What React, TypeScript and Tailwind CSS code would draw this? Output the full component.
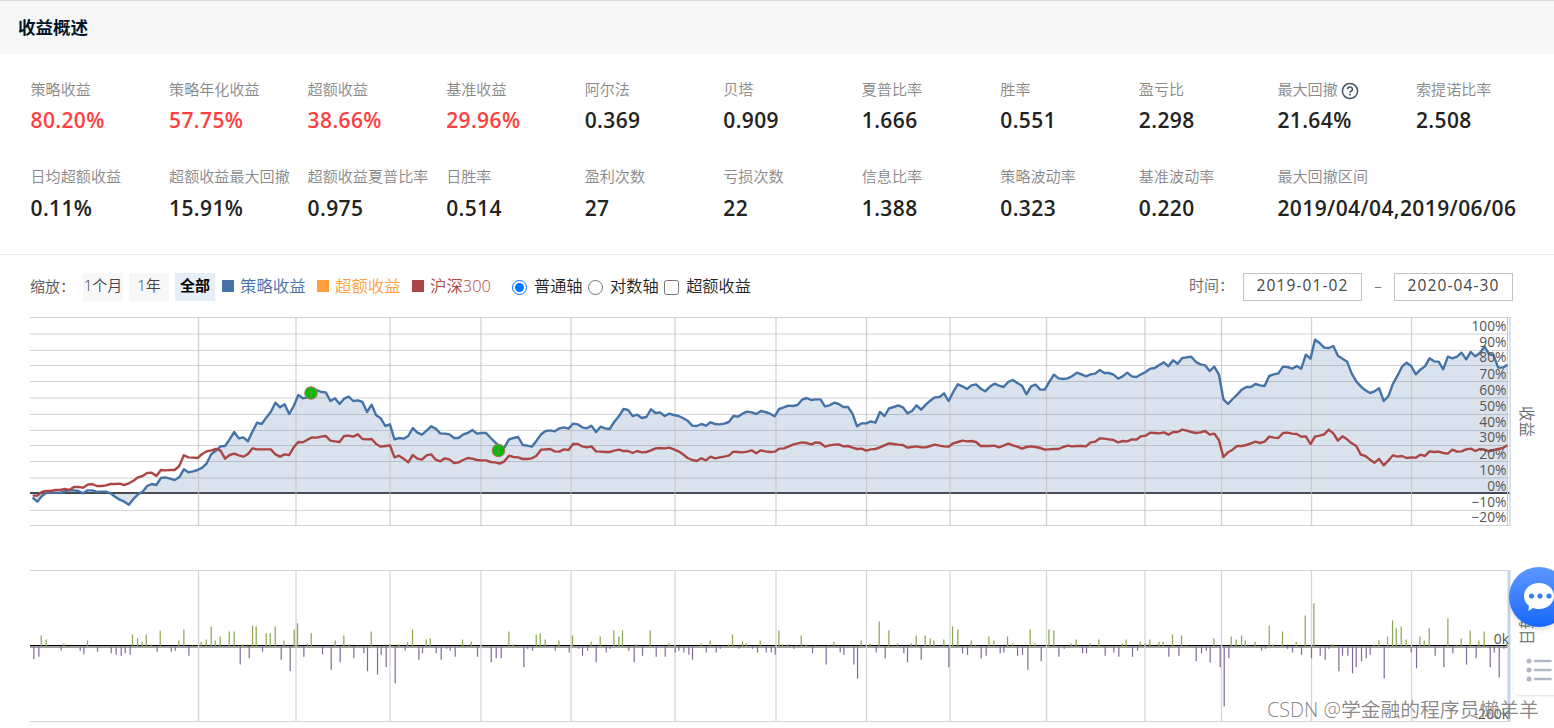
import React, { useState } from 'react';

const FONT = '"Open Sans", "Noto Sans CJK SC", sans-serif';

const metrics = [
  { label: '策略收益', value: '80.20%', up: true },
  { label: '策略年化收益', value: '57.75%', up: true },
  { label: '超额收益', value: '38.66%', up: true },
  { label: '基准收益', value: '29.96%', up: true },
  { label: '阿尔法', value: '0.369' },
  { label: '贝塔', value: '0.909' },
  { label: '夏普比率', value: '1.666' },
  { label: '胜率', value: '0.551' },
  { label: '盈亏比', value: '2.298' },
  { label: '最大回撤', value: '21.64%', help: true },
  { label: '索提诺比率', value: '2.508' },
  { label: '日均超额收益', value: '0.11%' },
  { label: '超额收益最大回撤', value: '15.91%' },
  { label: '超额收益夏普比率', value: '0.975' },
  { label: '日胜率', value: '0.514' },
  { label: '盈利次数', value: '27' },
  { label: '亏损次数', value: '22' },
  { label: '信息比率', value: '1.388' },
  { label: '策略波动率', value: '0.323' },
  { label: '基准波动率', value: '0.220' },
  { label: '最大回撤区间', value: '2019/04/04,2019/06/06' },
];

// Series samples in thirds of a pixel, measured down from the top of the chart
const strategy = [
  563, 575, 558, 548, 548, 548, 549, 544, 540, 541, 543, 550, 541, 541, 546, 545, 545, 550, 560, 569,
  575, 584, 567, 553, 545, 528, 522, 525, 504, 502, 506, 510, 502, 478, 487, 484, 480, 473, 460, 432,
  422, 409, 408, 388, 366, 385, 382, 394, 364, 338, 342, 323, 305, 278, 292, 283, 312, 288, 255, 265,
  262, 247, 240, 246, 247, 273, 265, 282, 266, 260, 273, 271, 276, 306, 284, 316, 325, 348, 343, 388,
  384, 386, 378, 354, 368, 374, 362, 349, 356, 370, 371, 373, 384, 384, 373, 369, 360, 371, 369, 369,
  384, 397, 410, 412, 388, 384, 381, 405, 407, 410, 392, 373, 363, 361, 364, 355, 352, 356, 341, 343,
  352, 355, 347, 366, 350, 355, 357, 335, 319, 297, 300, 318, 314, 324, 321, 298, 309, 307, 318, 311,
  315, 318, 324, 332, 347, 348, 342, 347, 337, 342, 343, 341, 336, 318, 320, 311, 305, 307, 312, 303,
  306, 311, 319, 297, 292, 287, 288, 285, 269, 264, 270, 268, 268, 289, 286, 278, 282, 291, 291, 311,
  349, 340, 340, 334, 338, 306, 318, 295, 291, 286, 292, 310, 303, 286, 299, 284, 272, 262, 261, 250,
  273, 246, 223, 229, 237, 226, 223, 236, 244, 230, 221, 227, 231, 216, 210, 219, 227, 253, 229, 224,
  239, 239, 215, 194, 205, 207, 205, 198, 188, 193, 199, 193, 191, 180, 189, 189, 194, 206, 199, 188,
  199, 201, 193, 186, 176, 174, 165, 157, 169, 151, 161, 144, 142, 140, 156, 163, 166, 183, 170, 193,
  268, 282, 267, 254, 239, 231, 231, 222, 226, 228, 198, 193, 190, 170, 171, 176, 168, 176, 134, 146,
  89, 99, 113, 114, 108, 137, 146, 155, 190, 214, 229, 241, 249, 244, 235, 273, 259, 222, 197, 170,
  158, 168, 193, 179, 169, 145, 154, 155, 178, 140, 145, 140, 128, 148, 126, 139, 129, 110, 132, 136,
  173, 173, 164,
];

const benchmark = [
  557, 557, 546, 543, 543, 540, 540, 537, 540, 531, 531, 533, 524, 522, 528, 528, 526, 522, 522, 521,
  525, 520, 512, 502, 498, 489, 488, 498, 480, 481, 480, 480, 468, 436, 442, 443, 444, 432, 424, 421,
  417, 422, 446, 435, 431, 436, 440, 432, 415, 418, 418, 418, 418, 433, 440, 433, 435, 412, 396, 397,
  389, 382, 383, 380, 378, 392, 394, 396, 378, 377, 380, 373, 387, 388, 387, 402, 410, 408, 406, 442,
  437, 446, 457, 435, 446, 449, 436, 433, 449, 454, 445, 448, 459, 457, 450, 444, 446, 450, 451, 451,
  456, 457, 461, 454, 437, 441, 442, 447, 447, 445, 437, 419, 418, 417, 424, 425, 418, 420, 402, 402,
  409, 412, 409, 424, 425, 426, 426, 422, 419, 423, 423, 429, 423, 427, 426, 421, 415, 414, 415, 413,
  418, 424, 433, 444, 450, 453, 445, 451, 440, 445, 442, 440, 437, 425, 426, 427, 425, 421, 430, 421,
  424, 426, 425, 416, 415, 410, 404, 400, 397, 399, 403, 397, 399, 410, 406, 404, 403, 409, 408, 413,
  417, 416, 422, 418, 417, 412, 406, 400, 402, 404, 405, 413, 411, 409, 412, 412, 408, 404, 407, 409,
  410, 400, 396, 392, 394, 393, 396, 408, 408, 408, 407, 412, 407, 401, 406, 410, 416, 411, 409, 411,
  414, 419, 418, 417, 417, 411, 407, 409, 408, 408, 409, 397, 395, 385, 386, 388, 390, 397, 393, 394,
  388, 389, 379, 377, 368, 369, 370, 367, 374, 366, 366, 359, 362, 366, 369, 367, 363, 374, 371, 390,
  441, 427, 419, 408, 408, 405, 400, 395, 399, 395, 380, 383, 384, 369, 368, 371, 372, 380, 379, 402,
  380, 377, 373, 359, 370, 392, 379, 388, 400, 408, 434, 438, 449, 458, 447, 466, 452, 436, 440, 438,
  444, 442, 443, 434, 438, 424, 426, 425, 429, 431, 419, 425, 424, 418, 416, 423, 417, 419, 424, 420,
  417, 414, 406,
];

// Daily profit and loss bars: offset of the block, then [x, height] in thirds of a pixel
const gains: [number, number[][]][] = [
  [0, [
    [63, 33], [78, 21], [131, 9], [146, 1], [161, 1], [202, 18], [243, 1], [337, 36], [352, 25], [366, 14],
    [378, 36], [393, 6], [420, 48], [435, 1], [476, 18], [491, 51], [517, 3], [530, 1], [543, 14], [558, 21],
    [573, 60], [585, 18], [600, 30], [627, 45], [642, 45], [667, 6], [697, 63], [708, 60], [738, 40], [750, 40],
    [765, 60], [791, 18], [822, 51], [832, 70], [862, 9], [873, 40], [945, 18], [971, 33], [986, 6], [1012, 3],
    [1053, 45], [1110, 6], [1136, 6], [1162, 13], [1177, 51], [1218, 21], [1230, 25], [1327, 21], [1342, 3],
    [1353, 15], [1395, 1], [1451, 1], [1466, 45],
  ]],
  [1470, [
    [8, 6], [22, 1], [78, 36], [90, 40], [105, 21], [120, 1], [146, 18], [161, 1], [187, 33], [243, 14], [270, 30],
    [311, 48], [326, 30], [337, 48], [378, 6], [408, 1], [420, 48], [450, 1], [476, 9], [573, 9], [600, 18],
    [641, 1], [656, 6], [667, 36], [697, 14], [708, 9], [750, 18], [806, 48], [817, 6], [832, 6], [858, 3],
    [873, 33], [888, 6], [914, 3], [956, 3], [971, 14], [1053, 18], [1080, 9], [1107, 75], [1136, 48], [1148, 3],
    [1162, 9], [1203, 9], [1218, 33], [1245, 33], [1260, 25], [1271, 18], [1301, 21], [1327, 60], [1343, 51],
    [1383, 18], [1395, 4], [1436, 30], [1451, 18],
  ]],
  [2940, [
    [22, 30], [37, 9], [90, 51], [105, 9], [146, 51], [161, 48], [202, 1], [213, 9], [228, 21], [269, 9], [284, 1],
    [296, 21], [367, 9], [378, 21], [420, 14], [435, 9], [449, 21], [461, 1], [476, 14], [489, 14], [517, 36],
    [544, 33], [558, 3], [571, 1], [641, 25], [693, 30], [708, 21], [724, 33], [735, 18], [765, 14], [807, 63],
    [817, 6], [832, 1], [847, 45], [888, 14], [915, 93], [941, 130], [997, 6], [1121, 6], [1136, 18], [1162, 30],
    [1177, 78], [1188, 55], [1203, 60], [1218, 21], [1259, 30], [1272, 18], [1287, 55], [1343, 85], [1368, 6],
    [1383, 25], [1410, 48], [1436, 18], [1452, 45], [1519, 9],
  ]],
];

const losses: [number, number[][]][] = [
  [0, [
    [41, 38], [56, 31], [123, 13], [180, 13], [191, 23], [232, 16], [273, 20], [288, 25], [303, 28], [315, 20],
    [330, 25], [411, 16], [453, 16], [465, 13], [506, 28], [660, 54], [687, 35], [727, 16], [783, 40], [810, 74],
    [851, 31], [907, 23], [933, 70], [960, 47], [1001, 35], [1031, 20], [1042, 74], [1072, 84], [1083, 25],
    [1098, 62], [1125, 110], [1155, 13], [1196, 40], [1207, 20], [1248, 20], [1263, 40], [1279, 7], [1290, 13],
    [1305, 31], [1372, 31], [1413, 47], [1428, 35], [1443, 35],
  ]],
  [1470, [
    [41, 62], [52, 7], [67, 13], [135, 13], [177, 18], [206, 7], [217, 28], [232, 13], [258, 47], [288, 18],
    [300, 7], [356, 13], [372, 47], [397, 28], [438, 31], [465, 31], [495, 18], [506, 13], [521, 18], [536, 25],
    [547, 40], [588, 18], [618, 18], [630, 7], [686, 7], [727, 7], [742, 18], [768, 18], [783, 18], [795, 25],
    [851, 7], [907, 20], [948, 54], [990, 18], [1001, 25], [1031, 54], [1042, 96], [1098, 18], [1125, 35],
    [1181, 20], [1192, 47], [1233, 40], [1316, 62], [1357, 20], [1372, 25], [1413, 35], [1428, 28],
  ]],
  [2940, [
    [0, 20], [11, 18], [52, 28], [67, 25], [83, 70], [123, 44], [176, 31], [192, 7], [247, 20], [259, 20],
    [315, 28], [341, 18], [356, 31], [397, 31], [412, 13], [506, 31], [536, 28], [588, 44], [604, 20], [618, 13],
    [630, 48], [660, 62], [672, 180], [686, 35], [784, 13], [796, 7], [862, 7], [877, 18], [904, 25], [934, 35],
    [960, 28], [975, 40], [986, 7], [1016, 74], [1027, 28], [1043, 28], [1057, 80], [1068, 62], [1084, 44],
    [1098, 35], [1110, 25], [1152, 96], [1233, 18], [1249, 65], [1305, 28], [1331, 62], [1358, 20], [1399, 54],
    [1428, 35], [1470, 62], [1482, 18], [1497, 93], [1511, 7],
  ]],
];

const monthLines = [198.5, 296, 390, 481, 571, 675, 776, 866.5, 950, 1046.5, 1145, 1221.5, 1311.5, 1411.5];
const percentLines = [7.5, 24, 40.5, 55.5, 71.5, 88, 104.5, 120.5, 135.5, 151.5, 168, 200.5, 215.5];

const percentLabels: [string, number][] = [
  ['100%', 16], ['90%', 32], ['80%', 47], ['70%', 64], ['60%', 80], ['50%', 96], ['40%', 112],
  ['30%', 127], ['20%', 144], ['10%', 160], ['0%', 176], ['−10%', 192], ['−20%', 207],
];

const toPath = (values: number[]) =>
  values.map((v, i) => `${i === 0 ? 'M' : 'L'}${(32.7 + i * 4.5797).toFixed(2)} ${(v / 3 + 2).toFixed(2)}`).join('');

const barPath = (blocks: [number, number[][]][], direction: number) =>
  blocks
    .map(([start, bars]) =>
      bars.map(([x, h]) => `M${(20.2 + (start + x) / 3).toFixed(2)} 338.5V${(338.5 + (direction * h) / 3).toFixed(2)}`).join('')
    )
    .join('');

const Marker = ({ x, y }: { x: number; y: number }) => (
  <g>
    <circle cx={x} cy={y} r={6.2} fill="#00be00" stroke="#a07a66" strokeWidth={1.2} />
    <path d={`M${x} ${y - 3.5}v7`} stroke="#6f8a4a" strokeWidth={1.4} />
  </g>
);

const Charts: React.FC = () => (
  <svg width="1554" height="418" viewBox="0 2 1554 418" className="block shrink-0" style={{ fontFamily: FONT }}>
    {/* Returns */}
    <g transform="translate(0 2)">
      <path d={percentLines.map((y) => `M30 ${y}H1510`).join('')} stroke="#d4d4d4" strokeWidth={1.2} />
      <path d="M30 183H1510" stroke="#46464c" strokeWidth={2} />
    </g>
    <path d={`${toPath(strategy)}V185H32.7Z`} fill="#4572a7" fillOpacity={0.2} />
    <path d={monthLines.map((x) => `M${x} 9V218`).join('')} stroke="#c0c0c0" strokeOpacity={0.7} strokeWidth={1.3} />
    <path d="M1507.5 9V218" stroke="#c8c8c8" />
    <path d="M1510 9V218" stroke="#c6d6e4" strokeWidth={1.4} />
    <path d={toPath(strategy)} fill="none" stroke="#4572a7" strokeWidth={2.4} strokeLinejoin="round" />
    <path d={toPath(benchmark)} fill="none" stroke="#aa4643" strokeWidth={2.4} strokeLinejoin="round" />
    <Marker x={311} y={85} />
    <Marker x={498.5} y={142.5} />
    <g fontSize="13.8" fill="#555" textAnchor="end">
      {percentLabels.map(([text, y]) => (
        <text key={text} x="1506.5" y={y + 7}>{text}</text>
      ))}
    </g>
    <text transform="translate(1521 98) rotate(90)" fontSize="15.5" fontWeight="350" fill="#666">收益</text>

    {/* Daily profit and loss */}
    <path d="M30 262.5H1508M30 413.5H1508" stroke="#d4d4d4" strokeWidth={1.2} />
    <path d="M30 339H1508" stroke="#a0a0a0" strokeWidth={2} />
    <path d="M30 337.5H1508" stroke="#000" />
    <path d={monthLines.map((x) => `M${x} 262V414`).join('')} stroke="#d6d6d6" strokeWidth={1.3} />
    <path d={barPath(gains, -1)} stroke="#89a54e" strokeWidth={1.2} />
    <path d={barPath(losses, 1)} stroke="#80699b" strokeWidth={1.2} />
    <path d="M1509 262V414" stroke="#c6d6e4" strokeWidth={3} />
    <g fontSize="13.8" fill="#555" textAnchor="end">
      <text x="1509" y="336">0k</text>
      <text x="1509" y="411">-200k</text>
    </g>
    <text transform="translate(1521 306) rotate(90)" fontSize="15.5" fontWeight="350" fill="#666">每日</text>
  </svg>
);

const Legend = ({ className, color, text }: { className: string; color: string; text: string }) => (
  <div className={`flex items-center ${className}`}>
    <span className={`mr-1.5 h-3 w-3 ${color}`} />
    {text}
  </div>
);

const App: React.FC = () => {
  const [axis, setAxis] = useState('normal');
  const [showExcess, setShowExcess] = useState(false);

  return (
    <div className="relative flex h-[728px] w-[1554px] flex-col overflow-hidden bg-white text-[#222]" style={{ fontFamily: FONT }}>
      <header className="flex h-[54px] shrink-0 items-center border-t border-[#d9dce1] bg-[#f7f7f7] pl-[18px]">
        <h2 className="text-[17.5px] font-bold text-[#001529]">收益概述</h2>
      </header>

      <section className="grid h-[201px] shrink-0 grid-cols-11 content-start border-b border-[#e8e8ef] pt-[23px] pl-[30px]">
        {metrics.map((m) => (
          <div key={m.label} className="h-[87.5px] pl-[0.5px] whitespace-nowrap">
            <div className="flex h-6 items-center text-[15.1px] font-[350] text-[#888]">
              {m.label}
              {m.help && (
                <svg width="18" height="18" viewBox="0 0 18 18" className="mt-1 ml-[3px]" fill="none" stroke="#4a5568">
                  <circle cx="9" cy="9" r="7.6" strokeWidth="1.5" />
                  <path d="M6.6 7.2a2.4 2.2 0 1 1 3.4 2c-.7.35-1 .7-1 1.5" strokeWidth="1.6" />
                  <path d="M9 11.8v1.6" strokeWidth="1.7" />
                </svg>
              )}
            </div>
            <div className={`mt-1 text-[21px] leading-[30px] font-[650] tracking-[0.4px] ${m.up ? 'text-[#ff4040]' : 'text-[#222]'}`}>{m.value}</div>
          </div>
        ))}
      </section>

      <section className="flex h-[55px] shrink-0 items-start pt-[18px] pl-[30px] text-[16.4px] font-[350]">
        <span className="w-[53px] text-[15px] leading-[27px] text-[#555]">缩放：</span>
        <button className="h-7 w-10 bg-[#f7f7f7] pb-1 text-[15px] whitespace-nowrap text-[#444]">1个月</button>
        <button className="ml-1.5 h-7 w-10 bg-[#f7f7f7] pb-1 text-[15px] whitespace-nowrap text-[#444]">1年</button>
        <button className="ml-1.5 h-7 w-10 bg-[#e6eff8] pb-1 text-[15px] font-bold whitespace-nowrap text-black">全部</button>
        <div className="flex h-[27px] items-center">
          <Legend className="ml-[7px] w-[95px] text-[#4572a7]" color="bg-[#4572a7]" text="策略收益" />
          <Legend className="w-[95px] text-[#ff9f40]" color="bg-[#ff9f40]" text="超额收益" />
          <Legend className="w-[100px] text-[#aa4643]" color="bg-[#aa4643]" text="沪深300" />
          <label className="flex h-[25px] items-center text-[16.2px]">
            <input type="radio" name="axis" className="mt-px mr-[7px] h-[15px] w-[15px]" checked={axis === 'normal'} onChange={() => setAxis('normal')} />
            普通轴
          </label>
          <label className="ml-[5.5px] flex h-[25px] items-center text-[16.2px]">
            <input type="radio" name="axis" className="mt-px mr-[7px] h-[15px] w-[15px]" checked={axis === 'log'} onChange={() => setAxis('log')} />
            对数轴
          </label>
          <label className="ml-[5.5px] flex h-[25px] items-center text-[16.2px]">
            <input type="checkbox" className="mt-px mr-[7px] h-[15px] w-[15px]" checked={showExcess} onChange={() => setShowExcess(!showExcess)} />
            超额收益
          </label>
        </div>
        <div className="mr-[41px] ml-auto flex items-start text-[15px] leading-[25px] text-[#444]">
          <span className="w-[54px] text-[#666]">时间：</span>
          <span className="h-7 w-[119px] border-[1.5px] border-[#c4c4c4] text-center text-[15.5px] leading-[23px] font-normal tracking-[1.1px]">2019-01-02</span>
          <span className="w-8 text-center">–</span>
          <span className="h-7 w-[119px] border-[1.5px] border-[#c4c4c4] text-center text-[15.5px] leading-[23px] font-normal tracking-[1.1px]">2020-04-30</span>
        </div>
      </section>

      <Charts />

      {/* Floating help buttons */}
      <div className="absolute top-[567px] left-[1509px] flex h-[60px] w-[60px] items-center rounded-full bg-linear-to-b from-[#5b97ff] to-[#1467fb] pl-3.5 shadow-md">
        <svg width="34" height="32" viewBox="0 0 34 32">
          <path d="M16 2c8.500 0 15 5.800 15 13s-6.500 13-15 13c-2.200 0-4.200-.3-6-1.100L5.500 30l.3-5.300C2.700 22.300 1 19 1 15 1 7.800 7.500 2 16 2Z" fill="#fff" />
          <circle cx="8.5" cy="15" r="2.600" fill="#3d7fe8" />
          <circle cx="17" cy="15" r="2.600" fill="#3d7fe8" />
          <circle cx="26" cy="15" r="2.600" fill="#3d7fe8" />
        </svg>
      </div>
      <div className="absolute top-[645px] left-[1513.5px] flex h-[50px] w-[60px] items-center rounded-md bg-white pl-2.5 shadow-sm">
        <svg width="32" height="28" viewBox="0 0 32 28" stroke="#b0b8c4" strokeWidth="2.500" strokeLinecap="round">
          <path d="M11 5h15.500M11 14h15.500M11 23h15.500" />
          <path d="M5 5h.1M5 14h.1M5 23h.1" strokeWidth="5" />
        </svg>
      </div>
      <div className="absolute top-[696px] left-[1267px] text-[19.8px] leading-7 font-[350] whitespace-nowrap text-[#888]">
        CSDN @学金融的程序员懒羊羊
      </div>
    </div>
  );
};

export default App;
